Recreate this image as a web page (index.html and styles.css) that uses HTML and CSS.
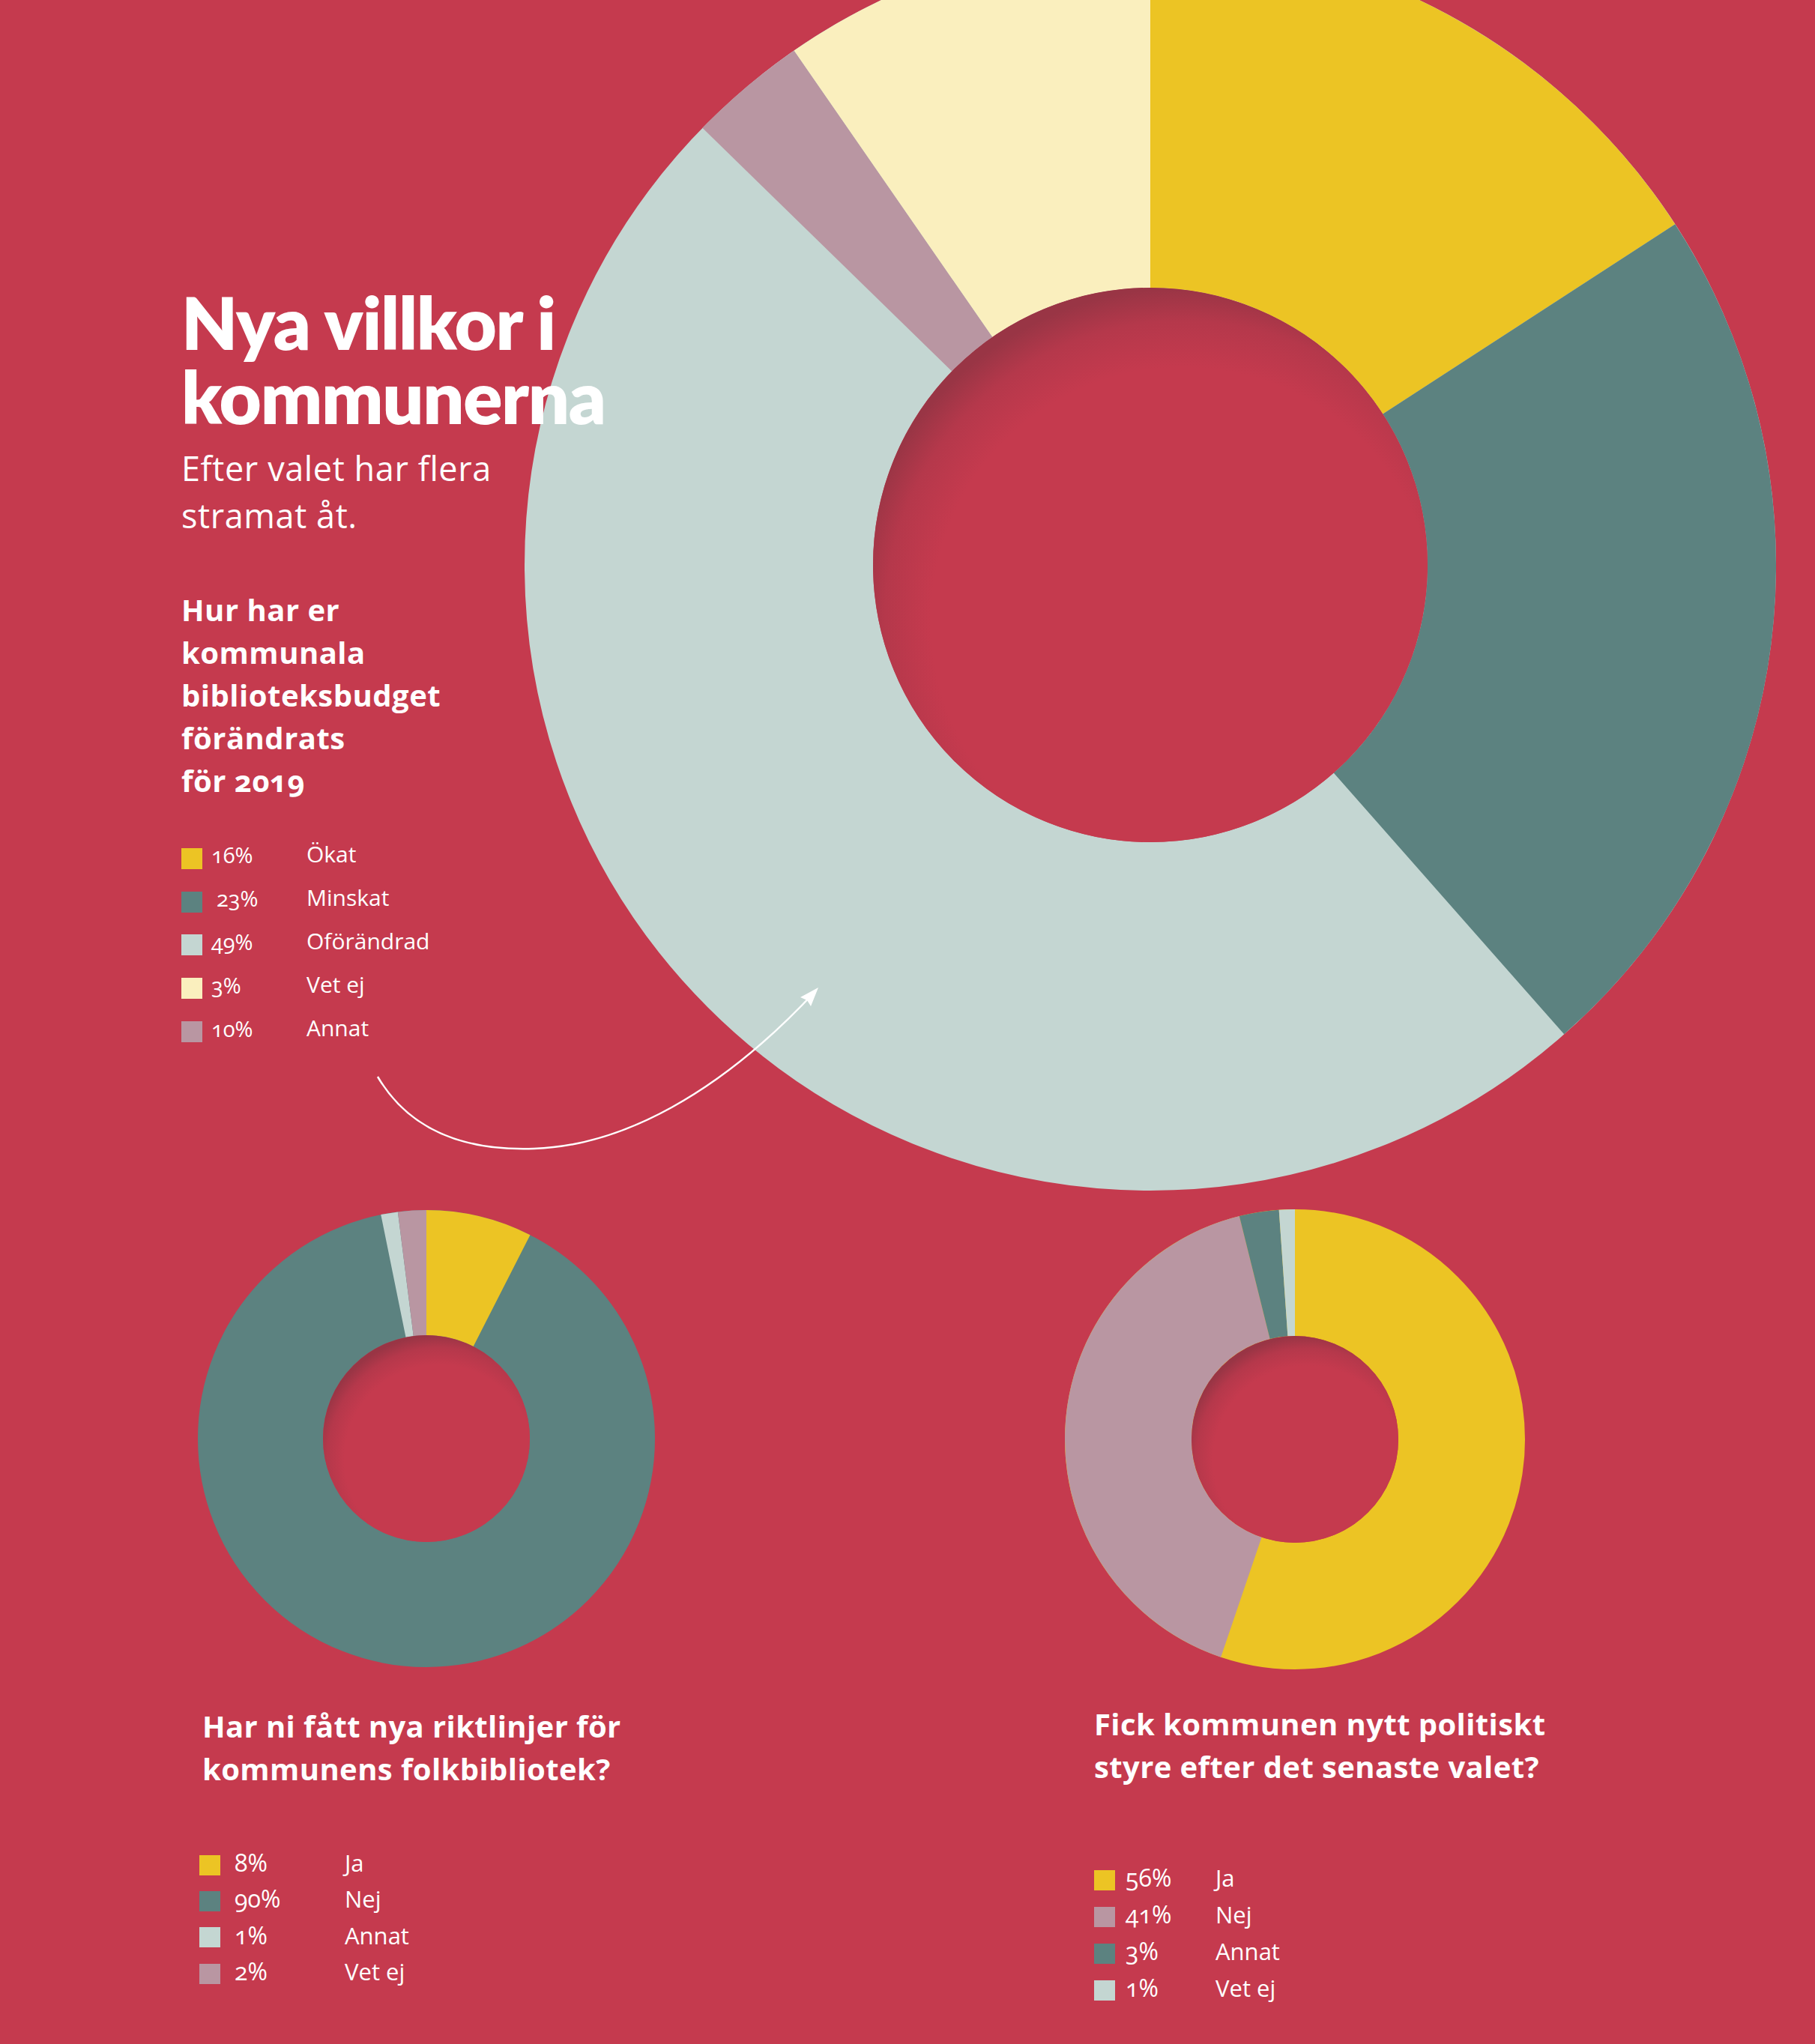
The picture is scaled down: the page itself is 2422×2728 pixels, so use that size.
FILE: index.html
```html
<!DOCTYPE html>
<html lang="sv">
<head>
<meta charset="utf-8">
<title>Nya villkor i kommunerna</title>
<link rel="stylesheet" href="styles.css">
</head>
<body>
<div class="page">
  <svg class="big-donut" viewBox="0 0 1670 1670" aria-hidden="true">
    <defs>
      <radialGradient id="holeA" cx="0.56" cy="0.6" r="0.6">
        <stop offset="0" stop-color="#C53A4E"/>
        <stop offset="0.76" stop-color="#C53A4E"/>
        <stop offset="0.9" stop-color="#B5384B"/>
        <stop offset="1" stop-color="#993545"/>
      </radialGradient>
    </defs>
    <g transform="rotate(-90 835 835)" fill="none" stroke-width="465">
      <circle cx="835" cy="835" r="602.5" stroke="#C4D6D2"/>
      <circle cx="835" cy="835" r="602.5" pathLength="360" stroke="#ECC424" stroke-dasharray="57 360" stroke-dashoffset="0"/>
      <circle cx="835" cy="835" r="602.5" pathLength="360" stroke="#5C8280" stroke-dasharray="81.6 360" stroke-dashoffset="-57"/>
      <circle cx="835" cy="835" r="602.5" pathLength="360" stroke="#B996A2" stroke-dasharray="11 360" stroke-dashoffset="-314.3"/>
      <circle cx="835" cy="835" r="602.5" pathLength="360" stroke="#FAEFBE" stroke-dasharray="34.7 360" stroke-dashoffset="-325.3"/>
    </g>
    <circle cx="835" cy="835" r="370" fill="url(#holeA)"/>
  </svg>

  <svg class="arrow" viewBox="0 0 620 250" aria-hidden="true">
    <path d="M14 137 C 60 215, 140 236, 223 233 C 340 229, 470 160, 597 24" fill="none" stroke="#FFFFFF" stroke-width="2.5"/>
    <polygon points="602,18 592,43 587,35 578,31" fill="#FFFFFF"/>
  </svg>

  <section class="intro">
    <h1 class="title">Nya villkor i<br>kommunerna</h1>
    <p class="subtitle">Efter valet har flera<br>stramat åt.</p>
    <h2 class="question">Hur har er<br>kommunala<br>biblioteksbudget<br>förändrats<br>för 2019</h2>
    <div class="legend legend-top">
      <span class="sw sw-yellow"></span><span class="pct">16%</span><span class="lbl">Ökat</span>
      <span class="sw sw-teal"></span><span class="pct shift">23%</span><span class="lbl">Minskat</span>
      <span class="sw sw-light"></span><span class="pct">49%</span><span class="lbl">Oförändrad</span>
      <span class="sw sw-cream"></span><span class="pct">3%</span><span class="lbl">Vet ej</span>
      <span class="sw sw-mauve"></span><span class="pct">10%</span><span class="lbl">Annat</span>
    </div>
  </section>

  <section class="charts">
    <div class="panel panel-left">
      <svg class="small-donut" viewBox="0 0 620 620" aria-hidden="true">
        <defs>
          <radialGradient id="holeB" cx="0.56" cy="0.6" r="0.6">
            <stop offset="0" stop-color="#C53A4E"/>
            <stop offset="0.76" stop-color="#C53A4E"/>
            <stop offset="0.9" stop-color="#B5384B"/>
            <stop offset="1" stop-color="#993545"/>
          </radialGradient>
        </defs>
        <g transform="rotate(-90 310 310)" fill="none" stroke-width="167">
          <circle cx="310" cy="310" r="221.5" stroke="#5C8280"/>
          <circle cx="310" cy="310" r="221.5" pathLength="360" stroke="#ECC424" stroke-dasharray="27 360" stroke-dashoffset="0"/>
          <circle cx="310" cy="310" r="221.5" pathLength="360" stroke="#C4D6D2" stroke-dasharray="4.3 360" stroke-dashoffset="-348.5"/>
          <circle cx="310" cy="310" r="221.5" pathLength="360" stroke="#B996A2" stroke-dasharray="7.2 360" stroke-dashoffset="-352.8"/>
        </g>
        <circle cx="310" cy="310" r="138" fill="url(#holeB)"/>
      </svg>
      <h3 class="q2">Har ni fått nya riktlinjer för<br>kommunens folkbibliotek?</h3>
      <div class="legend legend-bl">
        <span class="sw sw-yellow"></span><span class="pct">8%</span><span class="lbl">Ja</span>
        <span class="sw sw-teal"></span><span class="pct">90%</span><span class="lbl">Nej</span>
        <span class="sw sw-light"></span><span class="pct">1%</span><span class="lbl">Annat</span>
        <span class="sw sw-mauve"></span><span class="pct">2%</span><span class="lbl">Vet ej</span>
      </div>
    </div>
    <div class="panel panel-right">
      <svg class="small-donut" viewBox="0 0 620 620" aria-hidden="true">
        <defs>
          <radialGradient id="holeC" cx="0.56" cy="0.6" r="0.6">
            <stop offset="0" stop-color="#C53A4E"/>
            <stop offset="0.76" stop-color="#C53A4E"/>
            <stop offset="0.9" stop-color="#B5384B"/>
            <stop offset="1" stop-color="#993545"/>
          </radialGradient>
        </defs>
        <g transform="rotate(-90 310 311)" fill="none" stroke-width="169">
          <circle cx="310" cy="311" r="222.5" stroke="#ECC424"/>
          <circle cx="310" cy="311" r="222.5" pathLength="360" stroke="#B996A2" stroke-dasharray="147.2 360" stroke-dashoffset="-198.8"/>
          <circle cx="310" cy="311" r="222.5" pathLength="360" stroke="#5C8280" stroke-dasharray="10 360" stroke-dashoffset="-346"/>
          <circle cx="310" cy="311" r="222.5" pathLength="360" stroke="#C4D6D2" stroke-dasharray="4 360" stroke-dashoffset="-356"/>
        </g>
        <circle cx="310" cy="311" r="138" fill="url(#holeC)"/>
      </svg>
      <h3 class="q2">Fick kommunen nytt politiskt<br>styre efter det senaste valet?</h3>
      <div class="legend legend-br">
        <span class="sw sw-yellow"></span><span class="pct">56%</span><span class="lbl">Ja</span>
        <span class="sw sw-mauve"></span><span class="pct">41%</span><span class="lbl">Nej</span>
        <span class="sw sw-teal"></span><span class="pct">3%</span><span class="lbl">Annat</span>
        <span class="sw sw-light"></span><span class="pct">1%</span><span class="lbl">Vet ej</span>
      </div>
    </div>
  </section>
</div>
</body>
</html>
```

FILE: styles.css
```css
* { box-sizing: border-box; }

html, body {
  margin: 0;
  padding: 0;
  background: #C53A4E;
}

body {
  font-family: "Open Sans", "Noto Sans", sans-serif;
  color: #FFFFFF;
  font-variant-numeric: oldstyle-nums;
}

.page {
  position: relative;
  width: 2422px;
  height: 2728px;
  overflow: hidden;
  background: #C53A4E;
}

.big-donut {
  position: absolute;
  left: 700px;
  top: -81px;
  width: 1670px;
  height: 1670px;
  display: block;
}

.arrow {
  position: absolute;
  left: 490px;
  top: 1300px;
  width: 620px;
  height: 250px;
  z-index: 2;
}

.intro {
  position: relative;
  z-index: 1;
  padding: 380px 0 0 242px;
}

.title {
  margin: 0;
  font-family: "Lato", "Open Sans", sans-serif;
  font-weight: 800;
  font-size: 97px;
  line-height: 99px;
  letter-spacing: -1.3px;
}

.subtitle {
  margin: 15px 0 0;
  font-weight: 400;
  font-size: 45px;
  line-height: 63px;
  letter-spacing: 0.6px;
}

.question {
  margin: 66px 0 0;
  font-weight: 700;
  font-size: 40px;
  line-height: 57px;
  letter-spacing: 0.5px;
}

.legend {
  display: grid;
  align-items: center;
}

.legend-top {
  margin-top: 47px;
  grid-template-columns: 28px 115px auto;
  column-gap: 12px;
  grid-auto-rows: 57.8px;
}

.sw {
  display: block;
  width: 28px;
  height: 28px;
}

.legend-bl .sw,
.legend-br .sw {
  height: 27px;
}

.sw-yellow { background: #ECC424; }
.sw-teal { background: #5C8280; }
.sw-light { background: #C4D6D2; }
.sw-cream { background: #FAEFBE; }
.sw-mauve { background: #B996A2; }

.pct {
  font-size: 29px;
  line-height: 40px;
  padding-bottom: 9px;
  white-space: nowrap;
}

.lbl {
  font-size: 30px;
  line-height: 40px;
  padding-bottom: 11px;
  white-space: nowrap;
}

.shift { padding-left: 7px; }

.charts {
  display: grid;
  grid-template-columns: 1159px 1000px;
  padding-left: 259px;
  margin-top: 204px;
}

.small-donut {
  display: block;
  width: 620px;
  height: 620px;
}

.q2 {
  margin: 45px 0 0;
  font-weight: 700;
  font-size: 40px;
  line-height: 57px;
  letter-spacing: 0.4px;
}

.panel-left .q2 { padding-left: 11px; }
.panel-right .q2 { padding-left: 42px; margin-top: 42px; }

.legend-bl {
  margin-top: 76px;
  padding-left: 7px;
  grid-template-columns: 28px 128px auto;
  column-gap: 19px;
  grid-auto-rows: 48.3px;
}

.legend-br {
  margin-top: 99px;
  padding-left: 42px;
  grid-template-columns: 28px 106px auto;
  column-gap: 14px;
  grid-auto-rows: 49px;
}

.legend-bl .lbl,
.legend-br .lbl {
  font-size: 31px;
  padding-bottom: 6px;
}

.legend-bl .pct,
.legend-br .pct {
  font-size: 32px;
  padding-bottom: 6px;
}
```
